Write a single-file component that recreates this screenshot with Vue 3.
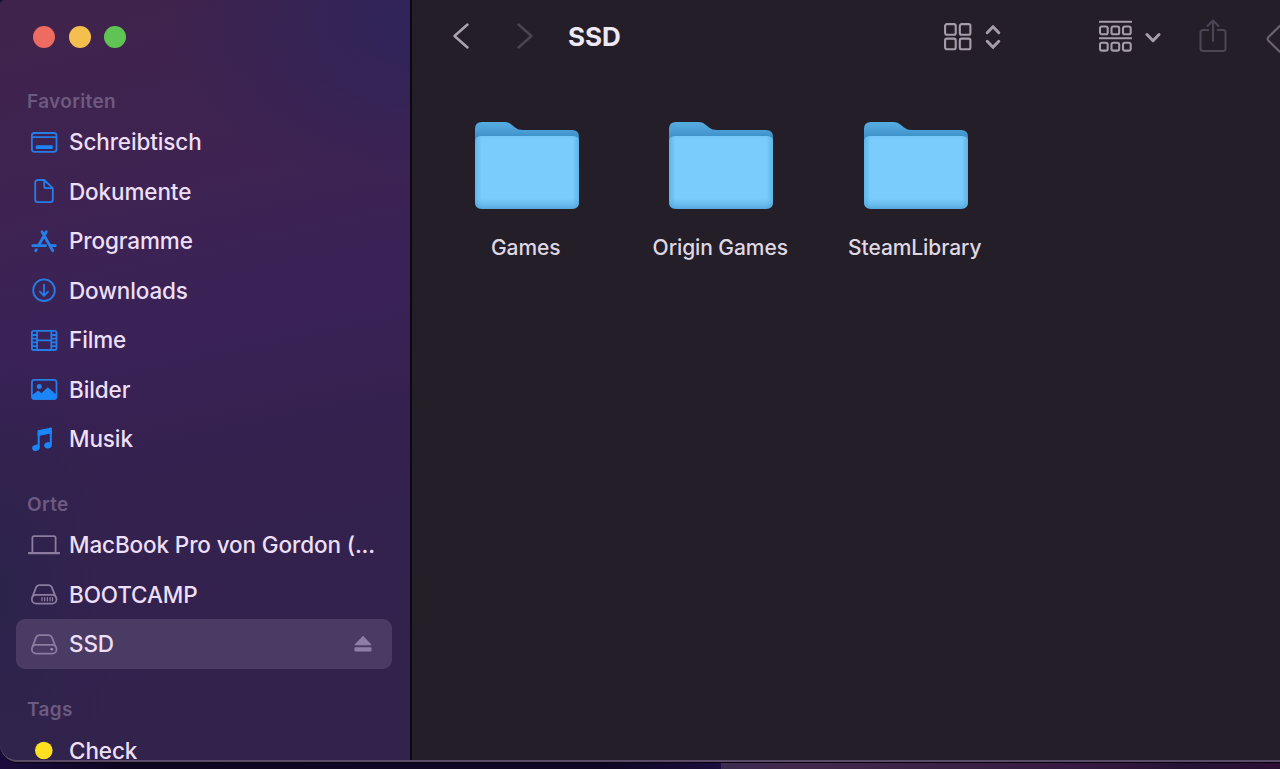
<script setup>
const sections = [
  {
    title: 'Favoriten',
    items: [
      { label: 'Schreibtisch', icon: 'desk' },
      { label: 'Dokumente', icon: 'document' },
      { label: 'Programme', icon: 'apps' },
      { label: 'Downloads', icon: 'download' },
      { label: 'Filme', icon: 'film' },
      { label: 'Bilder', icon: 'picture' },
      { label: 'Musik', icon: 'music' },
    ],
  },
  {
    title: 'Orte',
    items: [
      { label: 'MacBook Pro von Gordon (...', icon: 'laptop' },
      { label: 'BOOTCAMP', icon: 'internal' },
      { label: 'SSD', icon: 'drive', selected: true },
    ],
  },
  { title: 'Tags', items: [{ label: 'Check', icon: 'tag' }] },
]
const folders = ['Games', 'Origin Games', 'SteamLibrary']
</script>

<template>
  <div class="desktop">
    <div class="strip"></div>
    <div class="window">
      <aside class="sidebar">
        <div class="lights"><i class="red"></i><i class="yellow"></i><i class="green"></i></div>
        <section v-for="s in sections" :key="s.title">
          <h2>{{ s.title }}</h2>
          <div v-for="it in s.items" :key="it.label" class="row" :class="['row-' + it.icon, { selected: it.selected }]">
            <svg class="icon" viewBox="0 0 32 32" width="32" height="32">
              <g v-if="it.icon === 'desk'">
                <rect x="3.9" y="7" width="24.6" height="18.8" rx="2.5" />
                <path d="M4 11.2h24.4" />
                <rect class="solid" x="7.8" y="19.3" width="17" height="3.6" rx="1" />
              </g>
              <g v-else-if="it.icon === 'document'">
                <path d="M16.2 5H9.8a2.6 2.6 0 0 0-2.6 2.6v17a2.6 2.6 0 0 0 2.6 2.6h12.4a2.6 2.6 0 0 0 2.6-2.6V13.2zM16.2 5v6.2a2 2 0 0 0 2 2h6.6" />
              </g>
              <g v-else-if="it.icon === 'apps'" class="bold">
                <path d="M18.3 6.800 10.400 20.700M14 6.800l10.800 19M4.800 20.700h12.700M22.800 20.700h4.500M8.300 24.800l-.6 1" />
              </g>
              <g v-else-if="it.icon === 'download'">
                <circle cx="16" cy="16.2" r="10.8" />
                <path d="M16 10.6v11M11.9 17.7l4.1 4.1 4.1-4.1" />
              </g>
              <g v-else-if="it.icon === 'film'">
                <rect x="3.9" y="6.8" width="24.6" height="19.2" rx="1.8" />
                <path d="M9.1 7v19M23.3 7v19M9.1 16.4h14.2M4 11h5M4 14.7h5M4 18.4h5M4 22.1h5M23.3 11h5M23.3 14.7h5M23.3 18.4h5M23.3 22.1h5" />
              </g>
              <g v-else-if="it.icon === 'picture'">
                <rect x="3.9" y="6.8" width="24.6" height="19.2" rx="2.5" />
                <circle class="solid" cx="11.3" cy="13.6" r="2.5" />
                <path class="solid" d="M4 22.2l6.2-4.6 3.2 2.6 6.5-6 8.6 7.6v2a2.3 2.3 0 0 1-2.3 2.3H6.2A2.3 2.3 0 0 1 4 23.8z" />
              </g>
              <g v-else-if="it.icon === 'music'">
                <path d="M10.7 24V8.2M22.8 21.5V5.5" class="stem" />
                <path class="solid" d="M9.7 8.800c0-1 .5-1.500 1.300-1.700l11.300-2.400c.9-.2 1.500.2 1.500 1v4.600L9.700 13.300z" />
                <ellipse class="solid" cx="7.9" cy="24.9" rx="3.8" ry="3.1" transform="rotate(-18 7.9 24.9)" />
                <ellipse class="solid" cx="20" cy="22.3" rx="3.8" ry="3.1" transform="rotate(-18 20 22.3)" />
              </g>
              <g v-else-if="it.icon === 'laptop'">
                <path d="M4.4 23V8.800a1.600 1.600 0 0 1 1.600-1.600h20a1.600 1.600 0 0 1 1.600 1.600V23" />
                <path d="M.8 24.200h30.400" class="base" />
              </g>
              <g v-else-if="it.icon === 'internal' || it.icon === 'drive'">
                <path d="M4.400 18.800 8.200 9.200c.6-1.500 1.400-2.100 3-2.100h9.600c1.600 0 2.400.6 3 2.100l3.800 9.600" />
                <rect x="3.900" y="16.800" width="24.600" height="8.800" rx="4.200" />
                <path v-if="it.icon === 'internal'" class="vents" d="M14 19.600v3.200M16.700 19.600v3.200M19.400 19.600v3.200M22.100 19.600v3.200M24.500 19.600v3.200" />
                <circle v-else class="solid" cx="23.800" cy="21.200" r="1.300" />
              </g>
              <circle v-else class="tagdot" cx="15.800" cy="16.500" r="8.800" />
            </svg>
            <span>{{ it.label }}</span>
            <svg v-if="it.selected" class="eject" viewBox="0 0 18 18" width="18" height="18">
              <path d="M9 .8.9 9.200c-.4.5-.2 1.100.5 1.100h15.200c.7 0 .9-.6.5-1.100z" />
              <rect x=".5" y="12.200" width="17" height="4.200" rx=".8" />
            </svg>
          </div>
        </section>
      </aside>

      <main>
        <header>
          <svg class="back" viewBox="0 0 18 28" width="18" height="28"><path d="M15.500 2.500 2.500 14l13 11.500" /></svg>
          <svg class="forward" viewBox="0 0 18 28" width="18" height="28"><path d="M2.500 2.500 15.500 14l-13 11.500" /></svg>
          <h1>SSD</h1>
          <svg class="grid" viewBox="0 0 28 28" width="28" height="28">
            <rect x="1.100" y="1.100" width="10.600" height="10.600" rx="1.800" /><rect x="15.800" y="1.100" width="10.600" height="10.600" rx="1.800" />
            <rect x="1.100" y="15.600" width="10.600" height="10.600" rx="1.800" /><rect x="15.800" y="15.600" width="10.600" height="10.600" rx="1.800" />
          </svg>
          <svg class="updown" viewBox="0 0 16 26" width="16" height="26"><path d="M2.200 8.700 8 2.700l5.800 6M2.200 17.300l5.800 6 5.800-6" /></svg>
          <svg class="group" viewBox="0 0 33 32" width="33" height="32">
            <path d="M.8 1.700h31.400M.8 18.300h31.400" />
            <rect v-for="n in 6" :key="n" :x="1 + ((n - 1) % 3) * 11.5" :y="n < 4 ? 6.5 : 22.8" width="7.700" height="7.800" rx="1.900" />
          </svg>
          <svg class="down" viewBox="0 0 16 12" width="16" height="12"><path d="m2 2.500 6 6.200 6-6.200" /></svg>
          <svg class="share" viewBox="0 0 28 34" width="28" height="34">
            <path d="M9.200 11H4a2.500 2.500 0 0 0-2.500 2.500v16A2.500 2.500 0 0 0 4 32h20a2.500 2.500 0 0 0 2.500-2.500v-16A2.500 2.500 0 0 0 24 11h-5.200M14 22V1.800M8.500 7 14 1.500 19.500 7" />
          </svg>
          <svg class="label" viewBox="0 0 14 30" width="14" height="30"><path d="M14 1.800 2.500 13c-1.300 1.300-1.300 2.400 0 3.700L14 28" /></svg>
        </header>

        <div class="files">
          <figure v-for="f in folders" :key="f">
            <svg viewBox="0 0 106 90" width="106" height="90">
              <defs>
                <linearGradient id="tab" x1="0" y1="0" x2="0" y2="1">
                  <stop offset="0" stop-color="#57aee1" /><stop offset=".3" stop-color="#4b9fd6" /><stop offset=".55" stop-color="#3d91c9" />
                </linearGradient>
                <linearGradient id="front" x1="0" y1="0" x2="0" y2="1">
                  <stop offset="0" stop-color="#73c7f8" /><stop offset=".05" stop-color="#79ccfb" />
                  <stop offset=".86" stop-color="#79ccfc" /><stop offset=".94" stop-color="#69bbec" /><stop offset="1" stop-color="#55a9db" />
                </linearGradient>
                <linearGradient id="edge" x1="0" y1="0" x2="1" y2="0">
                  <stop offset="0" stop-color="#4fa8dc" stop-opacity=".65" /><stop offset=".06" stop-color="#4fa8dc" stop-opacity="0" />
                  <stop offset=".94" stop-color="#4fa8dc" stop-opacity="0" /><stop offset="1" stop-color="#4fa8dc" stop-opacity=".65" />
                </linearGradient>
              </defs>
              <path fill="url(#tab)" d="M1 28V8q0-7 7-7h22c4 0 5.500 1 8 3l3 2.500q3 2.500 8 2.500h49q7 0 7 7v12H1z" />
              <path fill="url(#front)" d="M1 21q0-6 6-6h92q6 0 6 6v60q0 7-7 7H8q-7 0-7-7z" />
              <path fill="url(#edge)" d="M1 21q0-6 6-6h92q6 0 6 6v60q0 7-7 7H8q-7 0-7-7z" />
            </svg>
            <figcaption>{{ f }}</figcaption>
          </figure>
        </div>
      </main>
    </div>
  </div>
</template>

<style>
body { margin: 0; overflow: hidden; background: #10061f; }
</style>

<style scoped>
.desktop {
  position: relative; width: 1280px; height: 769px; overflow: hidden;
  background: linear-gradient(90deg, #1b0b3d 0, #0e0521 120px, #0e0623 600px, #1b0d3c 720px);
  font-family: Inter, "Liberation Sans", sans-serif;
}
.strip {
  position: absolute; left: 721px; right: 0; bottom: 0; height: 7px;
  background: linear-gradient(90deg, #3b2c50 0, #41284c 80px, #35183f 370px, #251334 460px, #2c0e34 100%);
}
.window {
  position: relative; display: flex; box-sizing: border-box; width: 1300px; height: 762px;
  overflow: hidden; border-radius: 5px 0 0 18px; background: #241e29;
  box-shadow: 0 1px 0 #08030f;
}
.window::after {
  content: ""; position: absolute; inset: -2px 0 0 -1px; pointer-events: none;
  border: solid #5b4d69; border-width: 0 0 2px 1px; border-radius: 8px 0 0 18px;
}
.sidebar {
  box-sizing: border-box; flex: none; width: 412px; height: 762px; overflow: hidden;
  border-right: 2px solid #0c0712;
  background:
    radial-gradient(ellipse 240px 170px at 410px 20px, rgba(46, 36, 90, .95), transparent),
    radial-gradient(ellipse 120px 240px at 0 590px, rgba(42, 36, 75, .8), transparent),
    linear-gradient(168deg, #40234c 0, #3e2352 210px, #3a2257 350px, #35214f 480px, #33224d 640px, #31234b 100%);
}
.lights { display: flex; gap: 13.600px; height: 57.750px; padding: 26px 0 0 33px; }
.lights i { width: 22px; height: 22px; border-radius: 50%; }
.red { background: #ed6b60; }
.yellow { background: #f5bf4f; }
.green { background: #5fc454; }
section + section { padding-top: 23.750px; }
h2 {
  margin: 0; padding-left: 27px; height: 33px; line-height: 35px;
  font-size: 19px; font-weight: 600; letter-spacing: .35px; color: #6e5980;
}
.row {
  display: flex; align-items: center; box-sizing: border-box; height: 49.500px;
  margin: 0 18px 0 16px; padding: 0 20px 0 12px; border-radius: 9px;
  font-size: 22.500px; line-height: 26px; font-weight: 450; letter-spacing: -.12px; color: #ecdff6; white-space: nowrap;
}
.row span { margin: 1.200px 0 0 9px; flex: 1; }
.selected { background: #4a3b64; }
.icon { flex: none; fill: none; stroke: #257de8; stroke-width: 1.8; stroke-linecap: round; stroke-linejoin: round; }
.icon .solid { fill: #1c86f8; stroke: none; }
.bold { stroke-width: 2.8; stroke: #2580ec; }
.stem { stroke: #1c86f8; stroke-width: 2; }
.row-laptop .icon, .row-internal .icon, .row-drive .icon { stroke: #8b7b9f; }
.row-drive .icon .solid { fill: #a596b7; }
.base { stroke-width: 2.2; }
.vents { stroke-width: 1.3; }
.tagdot { fill: #fee01e; stroke: none; }
.eject { fill: #8e7ea7; flex: none; }
main { flex: 1; min-width: 0; }
header { display: flex; align-items: center; height: 73px; padding-left: 39.500px; }
header svg { flex: none; fill: none; stroke: #a59dab; stroke-width: 2.1; stroke-linecap: round; stroke-linejoin: round; }
header .back { margin-top: -1px; stroke-width: 2.5; stroke: #aaa3af; }
header .forward { margin: -1px 0 0 46.500px; stroke: #4b4451; stroke-width: 2.4; }
h1 { box-sizing: border-box; width: 410px; margin: 0; padding-left: 34px; font-size: 26px; line-height: 32px; font-weight: 700; color: #eee8f2; }
header .grid { margin-top: 1px; }
header .updown { margin: 1px 0 0 13px; stroke-width: 3; }
header .group { margin: -1px 0 0 97.500px; }
header .down { margin: 2px 0 0 13px; stroke-width: 3; }
header .share { margin: -2px 0 0 38px; stroke: #4c4553; }
header .label { margin: 5px 0 0 39.500px; stroke: #6b6372; }
.files { display: flex; margin: 48px 0 0 17.500px; }
figure { display: flex; flex-direction: column; align-items: center; width: 194.500px; margin: 0; }
figcaption { margin-top: 23px; font-size: 21px; line-height: 28px; font-weight: 500; letter-spacing: -.08px; color: #dfd8e2; transform: translateX(-1px); }
</style>
